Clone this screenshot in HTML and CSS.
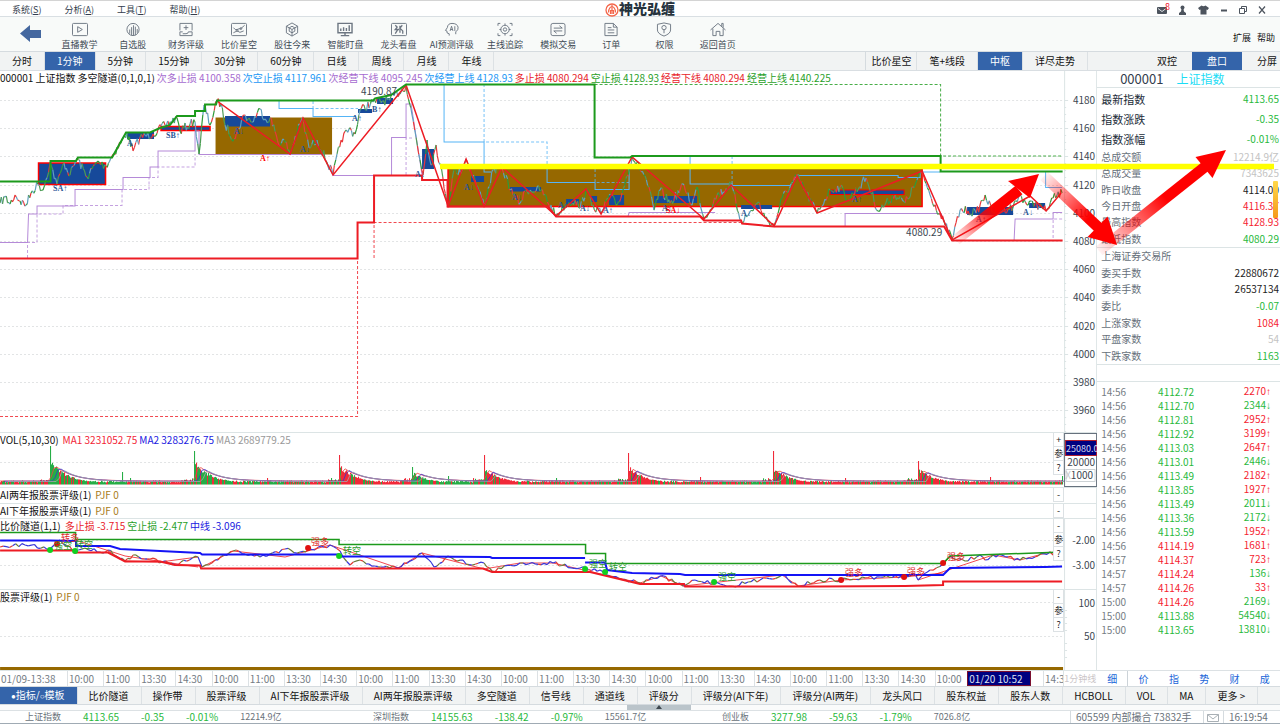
FILE: index.html
```
<!DOCTYPE html>
<html lang="zh-CN">
<head>
    <meta charset="UTF-8">
    <meta name="viewport" content="width=device-width, initial-scale=1.0">
    <title>神光弘缠</title>
    <link rel="stylesheet" href="styles.css">
</head>
<body>
    <header class="menubar">
        <nav class="menu">
            <a href="#">系统(<u>S</u>)</a>
            <a href="#">分析(<u>A</u>)</a>
            <a href="#">工具(<u>T</u>)</a>
            <a href="#">帮助(<u>H</u>)</a>
        </nav>
        <div class="brand">
            <svg width="14" height="14" viewBox="0 0 14 14" fill="none" stroke="#f4664a"><circle cx="7" cy="7" r="6" stroke-width="1.3"/><path d="M3.5 9.5C3.5 5 6 3.500 7 3.500S10.500 5 10.500 9.500M5.500 11V7.500h3V11M7 2v9" stroke-width="1.200"/></svg>
            <span>神光弘缠</span>
        </div>
        <div class="window-tools">
            <button type="button" class="mail" aria-label="消息"><svg width="12" height="10" viewBox="0 0 12 10"><rect x="1" y="2" width="10" height="7" rx="1" fill="#4d545e"/><path d="M2 3.500l4 3 4-3" stroke="#dfe3e6" fill="none"/></svg><b>8</b></button>
            <button type="button" aria-label="用户"><svg width="10" height="10" viewBox="0 0 10 10" fill="#4d545e"><circle cx="4.500" cy="2.500" r="2"/><path d="M3.500 4h2l.5 2.500L8 8v2H1V8l2-1.500z"/></svg></button>
            <button type="button" aria-label="皮肤"><svg width="11" height="10" viewBox="0 0 11 10" fill="#4d545e"><path d="M3.500.5Q5.500 2 7.500.5L11 3 9.500 5 8.500 4.500V9.500h-6v-5L1.500 5 0 3z"/></svg></button>
            <button type="button" class="win" aria-label="最小化"><svg width="8" height="8" viewBox="0 0 8 8"><path d="M1 4.500h6" stroke="#4d545e" stroke-width="2"/></svg></button>
            <button type="button" class="win" aria-label="还原"><svg width="8" height="8" viewBox="0 0 8 8" fill="none" stroke="#4d545e"><path d="M.5 2.500h5v5h-5zM2.500 2.500V.5h5v5h-2"/></svg></button>
            <button type="button" class="win" aria-label="关闭"><svg width="8" height="8" viewBox="0 0 8 8"><path d="M1 .5l6 7M7 .5l-6 7" stroke="#4d545e" stroke-width="1.200"/></svg></button>
        </div>
    </header>

    <div class="toolbar">
        <button type="button" class="back" aria-label="返回"><svg width="21" height="17" viewBox="0 0 21 17"><path d="M0 8.500L10 0v5h11v8H10v4z" fill="#44679f"/></svg></button>
        <div class="tools">
            <button type="button"><svg viewBox="0 0 18 16"><rect x="1" y="1.500" width="16" height="13" rx="1"/><path d="M6.500 5v6l5-3z"/></svg>直播教学</button>
            <button type="button"><svg viewBox="0 0 18 16"><circle cx="9" cy="8" r="6.500"/><path d="M5.500 12.500V8M7.500 14V5.500M9.500 14V3.500M11.500 14V5M13.500 11.500V7.500"/></svg>自选股</button>
            <button type="button"><svg viewBox="0 0 18 16"><path d="M2.500 9V1.500h13V9M9 3.500v5M6.500 6h5M2.500 10.500v4h13v-4h-4q0 2-2.500 2H5.500M2.500 10.500h3"/></svg>财务评级</button>
            <button type="button"><svg viewBox="0 0 18 16"><rect x="1" y="1.500" width="16" height="13" rx="1"/><path d="M3 6q2 3 4 2t4-1l4-3.500M3 11.500l4-2 3 1.500 4-1.500"/><circle cx="7" cy="9" r="1"/><circle cx="11" cy="7" r="1"/></svg>比价星空</button>
            <button type="button"><svg viewBox="0 0 18 16"><path d="M9 1l6 3.500v7L9 15l-6-3.500v-7zM3 4.500l6 3.500 6-3.500M9 8v7M6 6.300L9 4.500l3 1.800v3.500L9 11.500 6 9.800z"/></svg>股往今来</button>
            <button type="button"><svg viewBox="0 0 18 16"><path d="M1.500 1.500h15v10h-15zM9 11.500v3M4.500 14.500h9M4.500 9.500V7M7.500 9.500V5.500M10.500 9.500V6.500M13.500 9.500V3.500" stroke-width="1.500"/></svg>智能盯盘</button>
            <button type="button"><svg viewBox="0 0 18 16"><rect x="1" y="1.500" width="16" height="13" rx="1"/><path d="M5 3.500l2 2-2 2.500h4M5 12.500l2.500-4M12.500 3.500L10 6.500l3 3v3M10 4v7.500" stroke-width="1.400"/></svg>龙头看盘</button>
            <button type="button"><svg viewBox="0 0 18 16"><path d="M6 14.500v-2q-3 0-2.500-3l-1.500-.5 2-3q.5-4.500 5-4.500 5.500 0 6.500 4 .5 3-2.500 5v2.500M7 9.500l1.500-5 1.500 5M7.500 8h2M12 4.500v5"/></svg>AI预测评级</button>
            <button type="button"><svg viewBox="0 0 18 16"><path d="M1.500 4V1.500H4M14 1.500h2.500V4M1.500 12v2.500H4M14 14.500h2.500V12M9 1.500v2M9 12.500v2M3 8h2M13 8h2" /><circle cx="9" cy="8" r="4.500"/><circle cx="9" cy="8" r="1.800"/></svg>主线追踪</button>
            <button type="button"><svg viewBox="0 0 18 16"><rect x="1.500" y="1.500" width="15" height="13" rx="2"/><path d="M4.500 6.500h9l-3-2.500M13.500 9.500h-9l3 2.500"/></svg>模拟交易</button>
            <button type="button"><svg viewBox="0 0 18 16"><path d="M2.500 1.500h9l4 4v9h-13zM11.500 1.500v4h4M5.500 6h4M5.500 8.500h7M5.500 11.500h7"/></svg>订单</button>
            <button type="button"><svg viewBox="0 0 18 16"><path d="M9 1l7 1.500v6q0 4-7 6.500-7-2.500-7-6.500v-6z"/><circle cx="9" cy="6" r="2.300"/><path d="M9 8.300V12"/></svg>权限</button>
            <button type="button"><svg viewBox="0 0 18 16"><path d="M1 8.500L9 1.500l8 7M3.500 7v7.500h3.500V10h4v4.500h3.500V7M13 4.500v-3h1.500v4.500"/></svg>返回首页</button>
        </div>
        <div class="tool-links"><a href="#">扩展</a><a href="#">帮助</a></div>
    </div>

    <div class="tabs period-tabs">
        <button type="button">分时</button>
        <button type="button" class="active">1分钟</button>
        <button type="button">5分钟</button>
        <button type="button">15分钟</button>
        <button type="button">30分钟</button>
        <button type="button">60分钟</button>
        <button type="button">日线</button>
        <button type="button">周线</button>
        <button type="button">月线</button>
        <button type="button">年线</button>
        <span class="spacer"></span>
        <button type="button" class="first narrow">比价星空</button>
        <button type="button">笔+线段</button>
        <button type="button" class="active">中枢</button>
        <button type="button">详尽走势</button>
        <div class="view-tabs">
            <button type="button">双控</button>
            <button type="button" class="active">盘口</button>
            <button type="button">分屏</button>
        </div>
    </div>

    <main class="workspace">
        <div class="charts">
            <section class="pane">
                <div class="legend">
                    <span>000001 上证指数</span>
                    <span>多空隧道(0,1,0,1)</span>
                    <span class="purple">次多止损 4100.358</span>
                    <span class="sky">次空止损 4117.961</span>
                    <span class="purple">次经营下线 4095.245</span>
                    <span class="sky">次经营上线 4128.93</span>
                    <span class="red">多止损 4080.294</span>
                    <span class="green">空止损 4128.93</span>
                    <span class="red">经营下线 4080.294</span>
                    <span class="green">经营上线 4140.225</span>
                </div>
                <svg class="plot" viewBox="0 71 1097 361">
                    <g class="grid" id="priceGrid"></g>
                    <g class="axis" id="priceAxis"></g>

                    <!-- 中枢 -->
                    <g fill="#966800">
                        <rect x="215.500" y="117.500" width="116.500" height="37"/>
                        <rect x="448" y="166" width="474" height="40.500" stroke="#f00" stroke-width="1.500"/>
                    </g>
                    <g fill="#16499a">
                        <rect x="38.500" y="163" width="67" height="21.500" stroke="#f00" stroke-width="1.500"/>
                        <rect x="127" y="132" width="27" height="7"/>
                        <rect x="161" y="126.500" width="49" height="4" stroke="#f00" stroke-width="1.500"/>
                        <rect x="225" y="116" width="45" height="10.500"/>
                        <rect x="358" y="109" width="14" height="4"/>
                        <rect x="377" y="98" width="16" height="6"/>
                        <rect x="422" y="149" width="12" height="20"/>
                        <rect x="471" y="176" width="13" height="6"/>
                        <rect x="510" y="187" width="31" height="4.500"/>
                        <rect x="566" y="199" width="13" height="5"/>
                        <rect x="591" y="196" width="6" height="6"/>
                        <rect x="609" y="195" width="15" height="10"/>
                        <rect x="654" y="196" width="43" height="7"/>
                        <rect x="741" y="205" width="31" height="4"/>
                        <rect x="830" y="190" width="74" height="4.500" stroke="#f00"/>
                        <rect x="967" y="207" width="46" height="8"/>
                        <rect x="1029" y="203" width="16" height="5"/>
                    </g>

                    <g class="line purple-line">
                        <path d="M0 242.500H27.500L28.500 214H37V206H75V189.500H123V177.500H150V167H158V151H195V131H199V154.500H323L333 175.500H391.500V137.500H406V104H411L422 175M628 216L629 212.500H715M845 226V213.500H941L946 226M1014 240L1015 219H1053V212.500H1062"/>
                        <path class="dash" d="M27.500 258V242.500H37V214H63V205.500H122V189.500H149V177.500H158V167H195V154M406 175V138H412M1053 238V219H1062"/>
                    </g>
                    <g class="line sky-line">
                        <path d="M279 100V108.500H313V116.500H356M444 84V142H484V172H491M547 169V182.500H595V189.500H629V165M690 156V184H732V185.500H790L797 175.500H898V177.500H920V172H940M1045.500 172V187.500H1062"/>
                        <path class="dash" d="M313 101V108.500H358M484 84V142H547V165M595 169V182.500H629M732 156V184"/>
                    </g>
                    <g id="priceLine"></g>

                    <path class="line red-line dash" d="M0 416.500H357.500V258M374 258V222.500H741"/>
                    <path class="line red-line thick" d="M0 258.500H357.500V222.500H374V175.500H422V180H447.500V206.500H548L556 216.500H700L704 220.500H741L742 223.500 774 226.500H944L952 240.500H1062.500"/>
                    <path class="line red-line" d="M217 101L290 154 303 118 333 175 406 85 448 206 466 159 484 206 502 167 556 216 586 189 601 214 632 157 704 219 731 185 774 226 797 176 817 213 922 171 952 240 1030 196 1046 211 1061 193" stroke-width="1.500"/>
                    <path class="line green-line dash" d="M594.500 84.500H940.500V156H1062"/>
                    <path class="line green-line thick" d="M0 181.500H50.500V161H76L78 157.500H112L126 132.500H150L160 128 170 125 177 116H195V111H205V104.500H216L217 100.500H373L375 98.500 391 95 406 84.500H594.500V157.500H630L632 156H940.500V171.500H1062.500"/>

                    <g class="mark">
                        <text x="53" y="191">SA↑</text><text x="166" y="138">SB↑</text><text x="127" y="146">A</text>
                        <text x="234" y="134">A↓</text><text x="300" y="152">A↓</text><text x="352" y="121">A↑</text>
                        <text x="372" y="112">B↑</text><text x="415" y="177">A↓</text><text x="464" y="190">A↓</text>
                        <text x="512" y="200">A↓</text><text x="558" y="208">A↑</text><text x="580" y="211">A↓</text>
                        <text x="603" y="213">A↑</text><text x="662" y="211">A↓</text><text x="741" y="216">A↓</text>
                        <text x="852" y="202">A↑</text><text x="976" y="222">A↑</text><text x="1023" y="215">A↓</text>
                        <text x="260" y="161" class="hot">A↑</text><text x="666" y="213" class="hot">SA↓</text>
                    </g>
                    <text x="361" y="95" class="value">4190.87</text>
                    <text x="906" y="236" class="value">4080.29</text>
                </svg>
            </section>

            <section class="pane">
                <div class="legend">
                    <span>VOL(5,10,30)</span>
                    <span class="hot-red">MA1 3231052.75</span>
                    <span class="blue">MA2 3283276.75</span>
                    <span class="gray">MA3 2689779.25</span>
                </div>
                <svg class="plot" viewBox="0 433 1097 54">
                    <path class="grid" d="M0 462.500H1064"/>
                    <g id="volume"></g>
                    <rect x="1064.500" y="433.500" width="32" height="53" fill="#fff" stroke="#66717d"/>
                    <rect x="1065.500" y="440.500" width="31" height="15" fill="#000080" stroke="#b02030"/>
                    <text x="1066" y="452" class="value light">25080.0</text>
                    <text x="1095" y="466" class="value end">20000</text>
                    <path d="M1066 469.500H1095V481.500H1066z" fill="none" stroke="#ccd2d5"/>
                    <text x="1093" y="479" class="value end"><tspan fill="#c4c8cc">X</tspan>1000</text>
                </svg>
                <div class="pane-tools"><button type="button">+</button><button type="button">参</button><button type="button">?</button></div>
            </section>

            <section class="pane slim">
                <div class="legend"><span>AI两年报股票评级(1)</span><span class="gold">PJF 0</span></div>
                <div class="pane-tools"><button type="button">-</button></div>
            </section>
            <section class="pane slim short">
                <div class="legend"><span>AI下年报股票评级(1)</span><span class="gold">PJF 0</span></div>
                <div class="pane-tools"><button type="button">-</button></div>
            </section>

            <section class="pane">
                <div class="legend">
                    <span>比价隧道(1,1)</span>
                    <span class="red">多止损 -3.715</span>
                    <span class="green">空止损 -2.477</span>
                    <span class="blue">中线 -3.096</span>
                </div>
                <svg class="plot" viewBox="0 519 1097 70">
                    <path class="grid" d="M0 540.500H1064M0 565.500H1064"/>
                    <path class="axis-line" d="M1064.500 519V589M1096.500 519V589"/>
                    <text x="1095" y="544" class="value end">-2.00</text>
                    <text x="1095" y="569" class="value end">-3.00</text>
                    <path class="line red-line" d="M75 540L125 556 198 567M108 551L125 561 160 562 198 557M202 567L233 551 285 557 330 545 398 568 422 553 484 569 520 563 553 563 640 583 661 576 683 586 782 575 798 586 841 580 904 577 943 573M918 580L993 555 1020 560 1050 552 1062 557" opacity=".8"/>
                    <g id="tunnelLine"></g>
                    <path class="line green-line" d="M0 532.500H75.500V539.500H339V544.500H585.500V553.500H605.500V563.500H943L950 556 1062 552" stroke-width="1.500"/>
                    <path class="line blue-line" d="M0 540.500H50L76 541V546H110L120 549 160 551 200 553 202 554.500H339V556.500H420L490 557 492 558H585M585 562.500H605L607 570 632 573 680 574 685 575H943L950 568 1045 567 1062 566.500"/>
                    <path class="line red-line thick" d="M0 550.500H75V552.500H108L125 561.500H160L175 565 200 565.500 201 568.500H483L492 572H590L640 584H684L685 586.500H820L905 586 943 585V581.500H1062"/>
                    <g fill="#10d020"><circle cx="50" cy="550" r="3"/><circle cx="75" cy="551" r="3"/><circle cx="339" cy="556" r="3"/><circle cx="585" cy="569" r="3"/><circle cx="605" cy="572" r="3"/><circle cx="714" cy="582" r="3"/></g>
                    <g fill="#e01010"><circle cx="57" cy="544" r="3"/><circle cx="308" cy="548" r="3"/><circle cx="841" cy="580" r="3"/><circle cx="904" cy="577" r="3"/><circle cx="943" cy="563" r="3"/></g>
                    <g class="signal">
                        <text x="61" y="541">转多</text><text x="311" y="545">强多</text><text x="845" y="576">强多</text><text x="907" y="575">强多</text><text x="947" y="560">强多</text>
                    </g>
                    <g class="signal down">
                        <text x="54" y="549">强空</text><text x="75" y="548">转空</text><text x="343" y="554">转空</text><text x="589" y="567">强空</text><text x="609" y="570">转空</text><text x="718" y="580">强空</text>
                    </g>
                </svg>
                <div class="pane-tools"><button type="button">-</button><button type="button">参</button><button type="button">?</button></div>
            </section>

            <section class="pane last">
                <div class="legend"><span>股票评级(1)</span><span class="gold">PJF 0</span></div>
                <svg class="plot" viewBox="0 590 1097 80">
                    <path class="grid" d="M0 602.500H1064M0 636.500H1064"/>
                    <path class="axis-line" d="M1064.500 590V670M1096.500 590V670M1065 610.500h2M1065 617.500h2M1065 623.500h2M1065 630.500h2M1065 643.500h2M1065 650.500h2M1065 657.500h2"/>
                    <text x="1095" y="607" class="value end">100</text>
                    <text x="1095" y="640" class="value end">50</text>
                    <path d="M0 668.500H1063" stroke="#966800" stroke-width="3"/>
                </svg>
                <div class="pane-tools"><button type="button">-</button><button type="button">参</button><button type="button">?</button></div>
            </section>

            <div class="time-axis">
                <div class="times" id="times"><span>01/09-13:38</span></div>
                <span class="period">1分钟线</span>
                <span class="cursor-time">01/20 10:52</span>
            </div>
        </div>

        <aside class="quote">
            <h2>000001 <span>上证指数</span></h2>
            <dl class="rows main-rows">
                <div><dt>最新指数</dt><dd class="down">4113.65</dd></div>
                <div><dt>指数涨跌</dt><dd class="down">-0.35</dd></div>
                <div><dt>指数涨幅</dt><dd class="down">-0.01%</dd></div>
            </dl>
            <dl class="rows day-rows">
                <div><dt>总成交额</dt><dd class="flat">12214.9亿</dd></div>
                <div><dt>总成交量</dt><dd class="flat">7343625</dd></div>
                <div><dt>昨日收盘</dt><dd>4114.00</dd></div>
                <div><dt>今日开盘</dt><dd class="up">4116.37</dd></div>
                <div><dt>最高指数</dt><dd class="up">4128.93</dd></div>
                <div><dt>最低指数</dt><dd class="down">4080.29</dd></div>
            </dl>
            <dl class="rows market-rows">
                <div><dt>上海证券交易所</dt><dd></dd></div>
                <div><dt>委买手数</dt><dd>22880672</dd></div>
                <div><dt>委卖手数</dt><dd>26537134</dd></div>
                <div><dt>委比</dt><dd class="down">-0.07</dd></div>
                <div><dt>上涨家数</dt><dd class="up">1084</dd></div>
                <div><dt>平盘家数</dt><dd class="flat">54</dd></div>
                <div><dt>下跌家数</dt><dd class="down">1163</dd></div>
            </dl>
            <div class="blank-row"></div>
            <table class="ticks">
                <tbody>
                    <tr><td>14:56</td><td class="down">4112.72</td><td class="up">2270<i>↑</i></td></tr>
                    <tr><td>14:56</td><td class="down">4112.70</td><td class="down">2344<i>↓</i></td></tr>
                    <tr><td>14:56</td><td class="down">4112.81</td><td class="up">2952<i>↑</i></td></tr>
                    <tr><td>14:56</td><td class="down">4112.92</td><td class="up">3199<i>↑</i></td></tr>
                    <tr><td>14:56</td><td class="down">4113.03</td><td class="up">2647<i>↑</i></td></tr>
                    <tr><td>14:56</td><td class="down">4113.01</td><td class="down">2446<i>↓</i></td></tr>
                    <tr><td>14:56</td><td class="down">4113.49</td><td class="up">2182<i>↑</i></td></tr>
                    <tr><td>14:56</td><td class="down">4113.85</td><td class="up">1927<i>↑</i></td></tr>
                    <tr><td>14:56</td><td class="down">4113.49</td><td class="down">2011<i>↓</i></td></tr>
                    <tr><td>14:56</td><td class="down">4113.36</td><td class="down">2172<i>↓</i></td></tr>
                    <tr><td>14:56</td><td class="down">4113.59</td><td class="up">1952<i>↑</i></td></tr>
                    <tr><td>14:56</td><td class="up">4114.19</td><td class="up">1681<i>↑</i></td></tr>
                    <tr><td>14:57</td><td class="up">4114.37</td><td class="up">723<i>↑</i></td></tr>
                    <tr><td>14:57</td><td class="up">4114.24</td><td class="down">136<i>↓</i></td></tr>
                    <tr><td>14:57</td><td class="up">4114.26</td><td class="up">33<i>↑</i></td></tr>
                    <tr><td>15:00</td><td class="up">4114.26</td><td class="down">2169<i>↓</i></td></tr>
                    <tr><td>15:00</td><td class="down">4113.88</td><td class="down">54540<i>↓</i></td></tr>
                    <tr><td>15:00</td><td class="down">4113.65</td><td class="down">13810<i>↓</i></td></tr>
                </tbody>
            </table>
            <nav class="quote-tabs">
                <a href="#" class="current">细</a><a href="#">价</a><a href="#">指</a><a href="#">势</a><a href="#">财</a><a href="#">成</a>
            </nav>
        </aside>

        <!-- 画线工具图层 -->
        <svg class="drawings" viewBox="0 71 1280 615">
            <defs>
                <linearGradient id="fadeA" gradientUnits="userSpaceOnUse" x1="953" y1="242" x2="1014" y2="194"><stop offset="0" stop-color="#f00" stop-opacity="0"/><stop offset=".7" stop-color="#f00"/></linearGradient>
                <linearGradient id="fadeB" gradientUnits="userSpaceOnUse" x1="1042" y1="174" x2="1097" y2="226"><stop offset="0" stop-color="#f00" stop-opacity="0"/><stop offset=".85" stop-color="#f00"/></linearGradient>
                <linearGradient id="fadeC" gradientUnits="userSpaceOnUse" x1="1096" y1="254" x2="1203" y2="168"><stop offset="0" stop-color="#f00" stop-opacity="0"/><stop offset=".65" stop-color="#f00"/></linearGradient>
                <linearGradient id="amber" x2="0" y2="1"><stop offset="0" stop-color="#ffd84a"/><stop offset="1" stop-color="#f59a1c"/></linearGradient>
            </defs>
            <path d="M440 166.500H1274" stroke="#ff0" stroke-width="5.500"/>
            <g stroke-width="11" fill="#f00">
                <path d="M956 240L1019 190" stroke="url(#fadeA)"/>
                <path d="M1039 174L1008 181 1030 198z"/>
                <path d="M1044 176L1100 229" stroke="url(#fadeB)"/>
                <path d="M1117 245L1087.500 237 1107.500 216.500z"/>
                <path d="M1099 251L1206 166" stroke="url(#fadeC)"/>
                <path d="M1226 150L1195.500 157 1212.500 178z"/>
            </g>
            <rect x="1273" y="181" width="5" height="37" rx="1" fill="url(#amber)"/>
        </svg>
    </main>

    <div class="tabs indicator-tabs">
        <button type="button" class="active"><i>●</i>指标/<i>○</i>模板</button>
        <button type="button">比价隧道</button>
        <button type="button">操作带</button>
        <button type="button">股票评级</button>
        <button type="button">AI下年报股票评级</button>
        <button type="button">AI两年报股票评级</button>
        <button type="button">多空隧道</button>
        <button type="button">信号线</button>
        <button type="button">通道线</button>
        <button type="button">评级分</button>
        <button type="button">评级分(AI下年)</button>
        <button type="button">评级分(AI两年)</button>
        <button type="button">龙头风口</button>
        <button type="button">股东权益</button>
        <button type="button">股东人数</button>
        <button type="button">HCBOLL</button>
        <button type="button">VOL</button>
        <button type="button">MA</button>
        <button type="button">更多 &gt;</button>
    </div>
    <div class="scrollbar"><div class="thumb"><svg width="6" height="4" viewBox="0 0 6 4"><path d="M3 0l3 4H0z" fill="#3f4850"/></svg></div></div>

    <footer class="status">
        <div class="index"><span>上证指数</span><b>4113.65</b><b>-0.35</b><b>-0.01%</b><span>12214.9亿</span></div>
        <div class="index"><span>深圳指数</span><b>14155.63</b><b>-138.42</b><b>-0.97%</b><span>15561.7亿</span></div>
        <div class="index"><span>创业板</span><b>3277.98</b><b>-59.63</b><b>-1.79%</b><span>7026.8亿</span></div>
        <div class="news">605599 内部撮合 73832手</div>
        <div class="letter"><svg width="12" height="8" viewBox="0 0 12 8" fill="none" stroke="#a9b0b5"><path d="M.5.5h11v7H.5zM.5.5L6 5l5.500-4.500"/></svg></div>
        <div class="clock">16:19:54</div>
    </footer>

    <script src="script.js"></script>
</body>
</html>
```
FILE: styles.css
```
* {
    margin: 0;
    padding: 0;
    box-sizing: border-box;
}

body {
    font-family: "Noto Sans CJK SC", "Noto Sans", sans-serif;
    font-size: 10px;
    line-height: 14px;
    color: #222;
    background: #fff;
    overflow-x: hidden;
}

button {
    font: inherit;
    color: inherit;
    background: none;
    border: none;
    cursor: pointer;
    white-space: nowrap;
}

a {
    color: inherit;
    text-decoration: none;
}

i {
    font-family: "Liberation Sans", sans-serif;
    font-style: normal;
}

/* 菜单栏 */
.menubar {
    display: grid;
    grid-template-columns: 1fr auto 1fr;
    align-items: center;
    height: 17px;
    border-top: 1px solid #d4d4d4;
    border-bottom: 1px solid #d9dfe3;
}

.menu {
    display: flex;
    gap: 23px;
    padding-left: 12px;
    font-size: 9px;
    color: #333d4d;
}

.brand {
    display: flex;
    align-items: center;
    font-size: 14px;
    font-weight: 900;
    color: #26333d;
}

.brand span {
    line-height: 15px;
    height: 17px;
}

.window-tools {
    display: flex;
    align-items: center;
    justify-content: flex-end;
    gap: 10px;
    padding-right: 14px;
}

.window-tools button {
    display: flex;
}

.window-tools .win {
    padding-left: 1px;
}

.mail {
    position: relative;
}

.mail b {
    position: absolute;
    top: -3px;
    right: -2px;
    font-size: 9px;
    line-height: 10px;
    font-weight: 400;
    color: #f0142d;
}

/* 工具栏 */
.toolbar {
    display: flex;
    height: 34px;
    background: #f8faf9;
    color: #404a55;
    font-size: 9px;
}

.back {
    width: 53px;
    padding: 2px 0 0 8px;
}

.tools {
    display: flex;
    width: 54%;
}

.tools button {
    flex: 1 1 0;
    display: flex;
    flex-direction: column;
    align-items: center;
    padding-top: 5px;
    line-height: 12px;
}

.tools svg {
    width: 18px;
    height: 16px;
    margin-bottom: 2px;
    fill: none;
    stroke: #6d7682;
}

.tool-links {
    display: flex;
    gap: 6px;
    margin: 14px 5px 0 auto;
    color: #111;
}

/* 标签栏 */
.tabs {
    display: flex;
    background: #f1f3f3;
    color: #111;
}

.tabs button {
    padding: 0 12px;
    border-right: 1px solid #dce1e4;
}

.tabs .active {
    background: #3464aa;
    color: #fff;
}

.period-tabs {
    height: 20px;
    border-top: 1px solid #d5dbdf;
    border-bottom: 1px solid #d9dee2;
}

.period-tabs .spacer {
    flex: 1;
}

.period-tabs .first {
    border-left: 1px solid #d5dbdf;
}

.period-tabs .narrow {
    padding: 0 5px;
}

.view-tabs {
    display: flex;
    justify-content: flex-end;
    width: 15%;
}

.view-tabs button {
    padding: 0 15px;
    border: none;
}

.view-tabs button:last-child {
    padding-right: 3px;
}

/* 图表区 */
.workspace {
    position: relative;
    display: grid;
    grid-template-columns: 6fr 1fr;
}

.charts {
    min-width: 0;
}

.pane {
    position: relative;
    border-bottom: 1px solid #dce4e5;
}

.pane.last {
    border-bottom: none;
}

.pane.slim {
    height: 16px;
    border-right: 1px solid #dce4e5;
}

.pane.short {
    height: 15px;
}

.legend {
    position: absolute;
    top: 0;
    left: 0;
    display: flex;
    gap: 2px;
    white-space: nowrap;
    color: #111;
}

.pane:not(:first-child) .legend span:first-child {
    margin-right: 2px;
}

.plot {
    display: block;
    width: 100%;
}

.purple { color: #a66bd0; }
.sky { color: #1a98f5; }
.red { color: #e8222a; }
.green { color: #28a028; }
.hot-red { color: #f22436; }
.blue { color: #2020e0; }
.gray { color: #999; }
.gold { color: #a87c22; }

.grid {
    fill: none;
    stroke: #e2e4e5;
    stroke-dasharray: 2 2;
}

.axis-line {
    fill: none;
    stroke: #dce4e5;
}

.line {
    fill: none;
}

.dash {
    stroke-dasharray: 3 2;
    opacity: 0.8;
}

.thick {
    stroke-width: 2px;
}

.purple-line { stroke: #b58ad8; }
.sky-line { stroke: #55b4f6; }
.red-line { stroke: #ed1c24; }
.green-line { stroke: #1c9a1c; }

.blue-line {
    stroke: #1414f5;
    stroke-width: 2px;
}

.value {
    font-size: 10px;
    fill: #3c4650;
}

.end {
    text-anchor: end;
}

.light {
    fill: #d5d8f0;
    font-size: 9px;
}

.mark {
    font-family: "Liberation Serif", "Noto Sans CJK SC", serif;
    font-size: 8px;
    font-weight: 700;
    fill: #2c5596;
}

.mark .hot {
    fill: #f00;
}

.signal {
    font-size: 9px;
    fill: #e02828;
}

.signal.down {
    fill: #2a9a2a;
}

.pane-tools {
    position: absolute;
    top: 0;
    right: 33px;
    display: flex;
    flex-direction: column;
    width: 11px;
}

.slim .pane-tools {
    right: 32px;
}

.pane-tools button {
    height: 14px;
    line-height: 13px;
    font-size: 9px;
    background: #fff;
    border: 1px solid #dce1e4;
    border-width: 0 1px 1px;
}

/* 时间轴 */
.time-axis {
    position: relative;
    display: flex;
    height: 16px;
    border-top: 1px solid #dce4e5;
    line-height: 15px;
    color: #747c84;
}

.times {
    flex: 1;
    display: grid;
    grid-template-columns: 67px repeat(27, minmax(0, 36fr)) minmax(0, 20fr);
    overflow: hidden;
    border-right: 1px solid #dce4e5;
}

.times span {
    padding-left: 1px;
    white-space: nowrap;
}

.times span + span {
    border-left: 1px solid #dce1e4;
}

.period {
    width: 33px;
    overflow: hidden;
    white-space: nowrap;
    color: #cbc6c8;
    font-size: 9px;
}

.cursor-time {
    position: absolute;
    top: 0;
    right: 66px;
    width: 64px;
    padding-left: 1px;
    height: 15px;
    line-height: 14px;
    background: #000080;
    border: 1px solid #7a1030;
    color: #dfe2f2;
}

/* 盘口 */
.quote {
    display: flex;
    flex-direction: column;
    min-width: 0;
}

.quote h2 {
    display: flex;
    gap: 13px;
    height: 17px;
    padding-left: 23px;
    border-bottom: 1px solid #dce4e5;
    font-size: 13px;
    line-height: 16px;
    font-weight: 400;
    color: #333d4d;
}

.quote h2 span {
    font-size: 12px;
    color: #1bdcf5;
}

.rows {
    display: grid;
    grid-auto-rows: 1fr;
    padding: 0 1px 0 4px;
}

.rows div {
    display: flex;
    justify-content: space-between;
    align-items: center;
}

.rows dt {
    color: #66707a;
}

.main-rows {
    height: 61px;
    padding-top: 1px;
}

.main-rows dt {
    font-size: 11px;
    color: #222c38;
}

.day-rows {
    height: 99px;
    border-bottom: 1px solid #dce4e5;
}

.market-rows {
    height: 117px;
    border-bottom: 1px solid #dce4e5;
}

.up { color: #f5222f; }
.down { color: #28b93c; }
.flat { color: #c3c3c3; }

.blank-row {
    height: 17px;
    border-bottom: 1px solid #dce4e5;
}

.ticks {
    height: 250px;
    margin-top: 2px;
    border-collapse: collapse;
    table-layout: fixed;
    width: 100%;
    line-height: 13px;
    color: #747c84;
}

.ticks td {
    padding-left: 4px;
}

.ticks td + td {
    padding: 0;
    text-align: right;
}

.ticks td:nth-child(2) {
    padding-right: 30px;
}

.ticks td:last-child {
    padding-right: 9px;
}

.quote-tabs {
    display: flex;
    height: 16px;
    margin-top: auto;
    border-top: 1px solid #dce1e4;
    line-height: 16px;
    color: #2166d8;
}

.quote-tabs a {
    flex: 1;
    text-align: center;
}

.quote-tabs .current {
    border-right: 1px solid #ccd3d8;
}

.drawings {
    position: absolute;
    top: 0;
    left: 0;
    width: 100%;
    pointer-events: none;
}

/* 底部 */
.indicator-tabs {
    height: 19px;
    border-top: 1px solid #d5dbdf;
    border-bottom: 1px solid #d5dbdf;
}

.indicator-tabs button {
    padding: 0 12px 0 11px;
}

.indicator-tabs i {
    font-size: 8px;
}

.scrollbar {
    height: 6px;
    background: #fafbfb;
    border-bottom: 1px solid #dce1e4;
}

.scrollbar .thumb {
    display: flex;
    justify-content: center;
    width: 5%;
    height: 5px;
    margin-left: 49%;
    background: #bac4ca;
}

.status {
    display: grid;
    grid-template-columns: 348fr 349fr 373fr 133fr 20fr 57fr;
    height: 13px;
    line-height: 11px;
    color: #6a727a;
    border-bottom: 1px solid #a0abb4;
    white-space: nowrap;
}

.index {
    display: flex;
    gap: 22px;
    padding-left: 25px;
}

.index span {
    font-size: 9px;
}

.index b {
    font-weight: 400;
    color: #28b93c;
}

.news,
.letter,
.clock {
    border-left: 1px solid #d5dbdf;
    padding-left: 5px;
}

.letter {
    padding: 1px 0 0 3px;
}
```
FILE: script.js
```
const NS = 'http://www.w3.org/2000/svg';

function add(parent, tag, attrs, text) {
    const el = document.createElementNS(NS, tag);
    for (const key in attrs) el.setAttribute(key, attrs[key]);
    if (text) el.textContent = text;
    parent.appendChild(el);
}

let seed = 7;
function rand() {
    seed = (seed * 16807) % 2147483647;
    return seed / 2147483647;
}

// 价格坐标
const grid = document.getElementById('priceGrid');
const axis = document.getElementById('priceAxis');
add(axis, 'path', { d: 'M1064.5 71V432M1096.5 71V432', class: 'axis-line' });
for (let i = 0; i < 12; i++) {
    const y = Math.round(100 + i * 28.2);
    add(grid, 'path', { d: `M0 ${y + 0.5}H1064` });
    add(axis, 'path', { d: `M1064 ${y + 0.5}h4M1064 ${y + 7.5}h2M1064 ${y + 14.5}h2M1064 ${y + 21.5}h2`, class: 'axis-line' });
    add(axis, 'text', { x: 1095, y: y + 4, class: 'value end' }, String(4180 - i * 20));
}

// 在关键点之间补出分钟波动
function minutes(points, step, noise) {
    const out = [];
    for (let i = 0; i < points.length - 1; i++) {
        const [x1, y1] = points[i];
        const [x2, y2] = points[i + 1];
        const n = Math.max(1, Math.round((x2 - x1) / step));
        for (let k = 0; k < n; k++) {
            const t = k / n;
            out.push([x1 + (x2 - x1) * t, y1 + (y2 - y1) * t + (k ? (rand() - 0.5) * noise : 0)]);
        }
    }
    out.push(points[points.length - 1]);
    return out;
}

function drawSeries(id, points, step, noise, colors) {
    const layer = document.getElementById(id);
    const list = minutes(points, step, noise);
    const paths = colors.map(() => '');
    for (let i = 0; i < list.length - 1; i++) {
        const c = Math.floor(rand() * colors.length);
        paths[c] += `M${list[i].map(v => v.toFixed(1)).join(' ')}L${list[i + 1].map(v => v.toFixed(1)).join(' ')}`;
    }
    paths.forEach((d, i) => add(layer, 'path', { d, fill: 'none', stroke: colors[i], 'stroke-width': 1.2 }));
}

const parse = s => s.split(' ').map(p => p.split(',').map(Number));

const price = parse('0,203 5,197 10,204 15,195 20,201 26,205 31,193 38,184 43,190 50,163 57,184 64,163 70,175 77,158 87,177 97,162 106,166 112,156 127,133 133,151 140,137 153,134 165,125 177,118 180,131 190,124 195,122 199,154 204,105 210,125 217,101 221,104 225,125 234,139 244,115 252,122 260,109 266,120 270,118 280,145 284,140 290,153 302,118 309,148 317,140 333,175 341,140 349,129 355,134 360,110 373,102 390,100 406,86 412,115 420,160 423,175 427,140 431,165 436,145 448,205 455,165 458,175 466,159 475,180 484,205 493,170 502,168 513,195 520,203 526,190 541,190 556,216 565,205 575,200 580,208 586,190 593,205 601,214 609,195 617,205 622,193 632,157 645,176 654,210 660,190 670,203 684,185 692,205 697,187 704,219 717,195 731,185 741,221 748,215 758,202 765,218 774,226 782,198 797,176 817,213 830,190 840,187 848,200 866,178 878,211 895,195 905,203 922,172 930,195 945,225 952,239 960,210 968,211 976,213 985,195 992,212 1013,207 1020,195 1028,205 1035,203 1046,211 1053,198 1062,193');
drawSeries('priceLine', price, 1.3, 9, ['#e8383a', '#2f9a3a', '#5f9fbe', '#4f9a58']);

const tunnel = parse('0,547 25,545 50,549 60,540 75,551 85,548 100,552 108,550 125,561 133,555 150,559 175,565 198,557 202,567 215,560 233,551 260,557 285,549 300,552 330,545 340,551 350,565 360,560 375,566 398,568 422,553 434,567 448,556 472,565 484,563 492,571 520,563 553,563 580,568 600,570 610,576 640,583 660,576 683,586 695,580 720,584 730,586 760,580 782,575 798,586 820,580 841,580 880,577 904,577 915,574 918,580 930,570 943,564 950,556 965,561 980,555 985,560 993,555 1020,560 1050,552 1062,557');
drawSeries('tunnelLine', tunnel, 3, 4, ['#3838d8', '#3838d8', '#e03a34', '#6a7a3a']);

// 成交量：每日开盘放量后回落
const opens = [[50, 446, 24, 0], [194, 451, 23, 0], [339, 455, 20, 1], [412, 467, 12, 0], [484, 455, 16, 1], [628, 453, 18, 1], [773, 451, 17, 1], [918, 461, 16, 1]];
const small = [[122, 472, 0], [130, 478, 0], [267, 478, 1], [448, 476, 0], [556, 478, 0], [700, 477, 1], [845, 478, 1], [990, 477, 1], [1062, 476, 0]];
const vol = document.getElementById('volume');
const bars = ['', ''];
const averages = ['', '', ''];
for (let x = 0; x < 1063; x++) {
    let h = 1.5 + rand() * 2;
    let avg = 2;
    let tone = rand() > 0.5 ? 1 : 0;
    for (const [ox, top, size, color] of opens) {
        const d = x - ox;
        if (d > 0 && d < 90) {
            const fall = size * Math.exp(-d / 18);
            h = Math.max(h, fall * (0.75 + rand() * 0.3));
            avg += fall * Math.min(1, d / 5) * 0.85;
            if (rand() < 0.5) tone = color;
        }
        if (d < 0 && d > -12) h += rand() * 3;
        if (d === 0) {
            h = 484 - top;
            tone = color;
        }
    }
    for (const [sx, top, color] of small) {
        if (x === sx) {
            h = 484 - top;
            tone = color;
        }
    }
    bars[tone] += `M${x + 0.5} 484.5V${(484 - h).toFixed(1)}`;
    if (x % 3 === 0) {
        averages.forEach((a, i) => {
            averages[i] += `${a ? 'L' : 'M'}${x + i * 4} ${(483 - avg * (1 - i * 0.12)).toFixed(1)}`;
        });
    }
}
add(vol, 'path', { d: bars[0], stroke: '#18a83a' });
add(vol, 'path', { d: bars[1], stroke: '#f01c2c' });
['#f04040', '#3434d0', '#a8a8a8'].forEach((c, i) => add(vol, 'path', { d: averages[i], fill: 'none', stroke: c, 'stroke-width': 0.8 }));

// 时间轴刻度
const times = document.getElementById('times');
const hours = ['10:00', '11:00', '13:30', '14:30'];
for (let i = 0; i < 28; i++) {
    const cell = document.createElement('span');
    if (i < 25 || i === 27) cell.textContent = hours[i % 4];
    times.appendChild(cell);
}
```
